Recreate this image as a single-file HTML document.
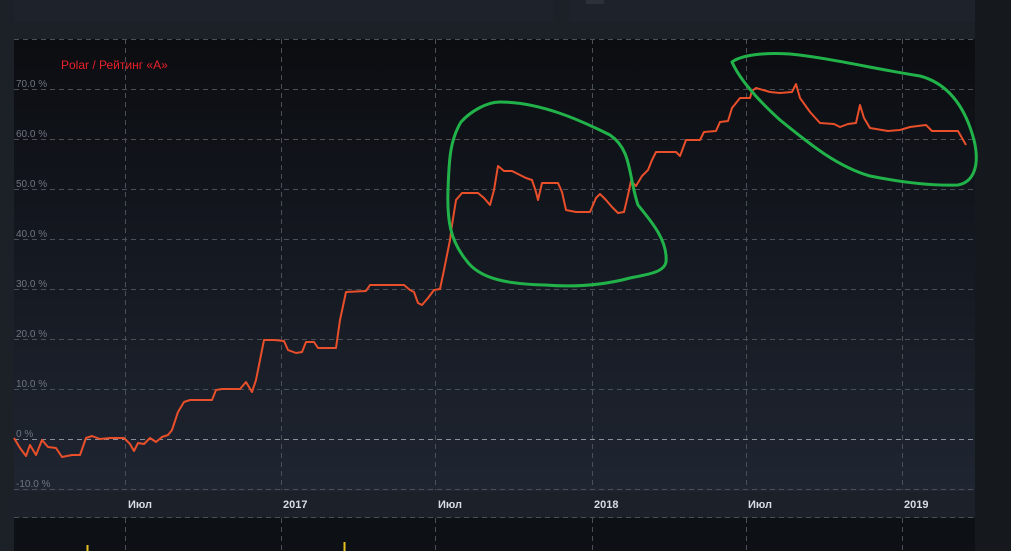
<!DOCTYPE html>
<html><head><meta charset="utf-8"><style>
html,body{margin:0;padding:0;width:1011px;height:551px;overflow:hidden;background:#1c2028;font-family:"Liberation Sans",sans-serif}
</style></head><body>
<svg width="1011" height="551" viewBox="0 0 1011 551" xmlns="http://www.w3.org/2000/svg" style="position:absolute;left:0;top:0">
<defs>
<linearGradient id="bg" x1="0" y1="0" x2="0" y2="1">
<stop offset="0" stop-color="#0b0d11"/><stop offset="1" stop-color="#1f2531"/>
</linearGradient>
</defs>
<rect x="0" y="0" width="1011" height="551" fill="#1c2027"/>
<rect x="975" y="0" width="36" height="551" fill="#15181d"/>
<rect x="14" y="0" width="539" height="22" fill="#1e232b"/>
<rect x="569" y="0" width="406" height="22" fill="#1e232b"/>
<rect x="586" y="0" width="18" height="4" fill="#2c3038"/>
<rect x="14" y="39" width="961" height="452" fill="url(#bg)"/>
<rect x="14" y="491" width="961" height="27" fill="#1c2029"/>
<rect x="14" y="518" width="961" height="33" fill="#0d1014"/>
<g stroke="#4a4f58" stroke-dasharray="5,4" stroke-width="1">
<line x1="14" y1="39.5" x2="975" y2="39.5"/>
<line x1="14" y1="89.5" x2="975" y2="89.5"/>
<line x1="14" y1="139.5" x2="975" y2="139.5"/>
<line x1="14" y1="189.5" x2="975" y2="189.5"/>
<line x1="14" y1="239.5" x2="975" y2="239.5"/>
<line x1="14" y1="289.5" x2="975" y2="289.5"/>
<line x1="14" y1="339.5" x2="975" y2="339.5"/>
<line x1="14" y1="389.5" x2="975" y2="389.5"/>
<line x1="14" y1="489.5" x2="975" y2="489.5"/>
<line x1="14" y1="517.5" x2="975" y2="517.5"/>
<line x1="125.5" y1="39" x2="125.5" y2="490"/><line x1="281.5" y1="39" x2="281.5" y2="490"/>
<line x1="435.5" y1="39" x2="435.5" y2="490"/><line x1="592.5" y1="39" x2="592.5" y2="490"/>
<line x1="746.5" y1="39" x2="746.5" y2="490"/><line x1="902.5" y1="39" x2="902.5" y2="490"/>
<line x1="125.5" y1="518" x2="125.5" y2="551"/><line x1="281.5" y1="518" x2="281.5" y2="551"/>
<line x1="435.5" y1="518" x2="435.5" y2="551"/><line x1="592.5" y1="518" x2="592.5" y2="551"/>
<line x1="746.5" y1="518" x2="746.5" y2="551"/><line x1="902.5" y1="518" x2="902.5" y2="551"/>
</g>
<line x1="14" y1="439.5" x2="975" y2="439.5" stroke="#8a8f98" stroke-dasharray="5,4"/>
<g font-size="10" fill="#6f7580">
<text x="16" y="87">70.0 %</text><text x="16" y="137">60.0 %</text><text x="16" y="187">50.0 %</text>
<text x="16" y="237">40.0 %</text><text x="16" y="287">30.0 %</text><text x="16" y="337">20.0 %</text>
<text x="16" y="387">10.0 %</text><text x="16" y="437">0 %</text><text x="16" y="487">-10.0 %</text>
</g>
<g font-size="11" fill="#d8dce2" font-weight="bold">
<text x="128" y="508">Июл</text><text x="283" y="508">2017</text><text x="438" y="508">Июл</text>
<text x="594" y="508">2018</text><text x="748" y="508">Июл</text><text x="904" y="508">2019</text>
</g>
<text x="61" y="69" font-size="12" fill="#e8202a">Polar / Рейтинг «А»</text>
<line x1="87.5" y1="545" x2="87.5" y2="551" stroke="#e8c020" stroke-width="2"/>
<line x1="344.5" y1="542" x2="344.5" y2="551" stroke="#e8c020" stroke-width="2"/>
<polyline fill="none" stroke="#e84f2a" stroke-width="2" stroke-linejoin="round" points="14,438 20,448 26,456 30,445 36,455 42,440 48,447 56,448 62,457 72,455 80,455 86,438 92,436 100,439 110,438 124,438 130,444 134,451 138,443 144,444 150,438 156,442 162,437 168,435 172,430 178,412 184,402 190,400 212,400 216,390 222,389 240,389 246,382 252,392 256,380 260,360 264,340 274,340 284,341 288,350 296,353 302,352 306,342 314,342 318,348 330,348 336,348 340,320 346,292 366,291 370,285 404,285 410,290 414,292 418,303 422,305 428,298 434,290 440,289 444,270 450,240 452,225 456,200 462,193 478,193 484,198 490,205 494,190 498,166 504,171 512,171 520,175 526,178 532,180 536,192 538,200 542,183 558,183 562,192 566,210 576,212 590,212 596,198 600,194 606,200 612,207 618,213 624,212 628,195 631,181 636,186 642,176 648,170 652,160 656,152 676,152 680,156 686,140 700,140 704,132 716,131 720,122 728,121 732,108 740,98 750,98 752,91 756,88 770,92 780,93 792,92 796,84 800,98 810,112 820,123 834,124 840,127 848,124 856,123 860,105 864,118 870,128 888,131 900,130 910,127 926,125 932,131 958,131 966,145"/>
<path fill="none" stroke="#22b24a" stroke-width="3" stroke-linejoin="round" d="M461,122 C470,112 486,102 500,102 C540,102 580,120 610,135 C632,150 628,175 638,205 C650,220 668,240 666,262 C664,272 650,274 630,278 C600,286 570,287 545,285 C510,284 480,280 466,260 C450,240 447,220 448,190 C449,160 450,140 461,122 Z"/>
<path fill="none" stroke="#22b24a" stroke-width="3" stroke-linejoin="round" d="M732,62 C740,56 760,52 790,54 C830,58 870,68 920,76 C950,84 966,110 974,140 C980,165 974,182 958,185 C930,186 900,182 870,176 C835,166 805,140 780,120 C758,100 740,80 732,62 Z"/>
</svg>
</body></html>
